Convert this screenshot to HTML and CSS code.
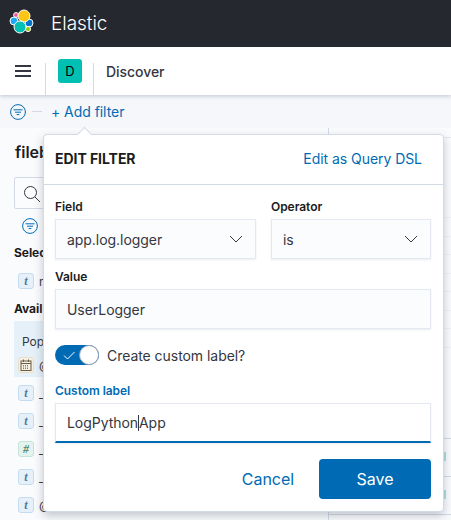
FILE: index.html
```html
<!DOCTYPE html>
<html lang="en">
<head>
    <meta charset="UTF-8">
    <meta name="viewport" content="width=device-width, initial-scale=1.0">
    <title>Discover - Elastic</title>
    <link rel="stylesheet" href="styles.css">
</head>
<body>
    <header class="topbar">
        <svg class="logo" width="26" height="26" viewBox="0 0 26 26">
            <g stroke="#fff" stroke-width="1">
                <circle cx="7" cy="6" r="2.400" fill="#f04e98"/>
                <circle cx="5" cy="12" r="4" fill="#1ba9f5"/>
                <circle cx="20" cy="14" r="4" fill="#0077cc"/>
                <circle cx="19" cy="20" r="2.600" fill="#93c90e"/>
                <circle cx="15" cy="7" r="6" fill="#fec514"/>
                <circle cx="11" cy="18" r="6" fill="#00bfb3"/>
            </g>
        </svg>
        <span class="brand">Elastic</span>
    </header>

    <nav class="navbar">
        <button class="burger" type="button" aria-label="Menu"><span></span><span></span><span></span></button>
        <div class="nav-space"><span class="avatar">D</span></div>
        <span class="nav-title">Discover</span>
    </nav>

    <div class="filterbar">
        <svg class="filter-icon" width="16" height="16" viewBox="0 0 16 16">
            <circle cx="8" cy="8" r="7.400" fill="none" stroke="#006bb4" stroke-width="1"/>
            <path d="M3.500 5.800h9M5 8.200h6M6.600 10.600h2.800" stroke="#006bb4" stroke-width="1" fill="none"/>
        </svg>
        <span class="filter-dash"></span>
        <a class="add-filter">+ Add filter</a>
    </div>

    <main class="content">
        <aside class="sidebar">
            <div class="index-name">fileb</div>
            <div class="search-box">
                <svg width="18" height="18" viewBox="0 0 18 18">
                    <circle cx="7.500" cy="7.500" r="6" fill="none" stroke="#343741" stroke-width="1"/>
                    <path d="M12 12l5 5" stroke="#343741" stroke-width="1"/>
                </svg>
            </div>
            <svg class="side-filter" width="16" height="16" viewBox="0 0 16 16">
                <circle cx="8" cy="8" r="7.400" fill="none" stroke="#006bb4" stroke-width="1"/>
                <path d="M3.500 5.800h9M5 8.200h6M6.600 10.600h2.800" stroke="#006bb4" stroke-width="1" fill="none"/>
            </svg>
            <div class="side-head">Selec</div>
            <div class="field-row first"><span class="tag">t</span><span>r</span></div>
            <div class="side-head avail">Avail</div>
            <div class="popular">
                <div class="pop-title">Pop</div>
                <div class="field-row pop-row">
                    <span class="tag date">
                        <svg width="12" height="12" viewBox="0 0 12 12">
                            <rect x="1" y="2" width="10" height="9.500" fill="none" stroke="#6a5d45" stroke-width="1"/>
                            <path d="M1 4.500h10M3.500 0.500v2.500M8.500 0.500v2.500" stroke="#6a5d45" stroke-width="1"/>
                            <path d="M3 6.500h6M3 8h6M3 9.500h6" stroke="#6a5d45" stroke-width="0.800" stroke-dasharray="1 1"/>
                        </svg>
                    </span>
                    <span>@</span>
                </div>
            </div>
            <div class="field-row"><span class="tag">t</span><span>_</span></div>
            <div class="field-row"><span class="tag">t</span><span>_</span></div>
            <div class="field-row"><span class="tag num">#</span><span>_</span></div>
            <div class="field-row"><span class="tag">t</span><span>_</span></div>
            <div class="field-row"><span class="tag">t</span><span>@</span></div>
        </aside>
        <section class="results">
            <div class="results-head"></div>
            <div class="faint-row"></div>
            <div class="faint-row"></div>
            <div class="faint-row"></div>
            <div class="faint-row"></div>
            <div class="faint-row"></div>
            <div class="faint-row"></div>
            <div class="faint-row"></div>
            <div class="faint-row last"></div>
            <div class="result-row"><span class="tick"></span></div>
            <div class="result-row"><span class="tick"></span></div>
            <div class="result-row end"></div>
        </section>
    </main>

    <div class="popover">
        <span class="arrow"></span>
        <div class="pop-head">
            <h2>EDIT FILTER</h2>
            <a>Edit as Query DSL</a>
        </div>
        <form class="pop-form">
            <div class="form-top">
                <div class="col-field">
                    <label>Field</label>
                    <div class="input select">
                        <span>app.log.logger</span>
                        <svg width="14" height="8" viewBox="0 0 14 8"><path d="M1 1l6 6 6-6" fill="none" stroke="#343741" stroke-width="1"/></svg>
                    </div>
                </div>
                <div class="col-op">
                    <label>Operator</label>
                    <div class="input select">
                        <span>is</span>
                        <svg width="14" height="8" viewBox="0 0 14 8"><path d="M1 1l6 6 6-6" fill="none" stroke="#343741" stroke-width="1"/></svg>
                    </div>
                </div>
            </div>
            <label>Value</label>
            <div class="input">UserLogger</div>
            <div class="switch-row">
                <span class="switch">
                    <svg width="12" height="9" viewBox="0 0 12 9"><path d="M1 4.500l3.500 3.500 7-7" fill="none" stroke="#fff" stroke-width="1"/></svg>
                    <span class="knob"></span>
                </span>
                <span>Create custom label?</span>
            </div>
            <label class="active">Custom label</label>
            <div class="input focused"><span>LogPython</span><span class="caret"></span><span>App</span></div>
            <div class="pop-actions">
                <a class="cancel">Cancel</a>
                <button class="save" type="button">Save</button>
            </div>
        </form>
    </div>
</body>
</html>
```

FILE: styles.css
```css
* {
    box-sizing: border-box;
}

body {
    margin: 0;
    height: 520px;
    overflow: hidden;
    font-family: Inter, "Liberation Sans", sans-serif;
    font-size: 14px;
    letter-spacing: -0.05px;
    color: #343741;
    background-color: #fafbfd;
}

.topbar {
    height: 47px;
    background-color: #25282f;
    display: flex;
    align-items: center;
    padding-left: 9px;
}

.logo {
    margin-right: 16px;
    margin-bottom: 3px;
}

.brand {
    color: #fff;
    font-size: 19px;
    font-weight: 300;
    margin-bottom: 1px;
}

.navbar {
    height: 48px;
    background-color: #fff;
    display: flex;
    align-items: center;
    box-shadow: 0 2px 3px rgba(152, 162, 179, 0.4);
    position: relative;
}

.burger {
    width: 46px;
    height: 32px;
    align-self: flex-end;
    padding: 0 0 16px;
    border: none;
    border-right: 1px solid #d3dae6;
    background: none;
    display: flex;
    flex-direction: column;
    align-items: center;
    justify-content: center;
    gap: 3px;
}

.burger span {
    display: block;
    width: 16px;
    height: 2px;
    background-color: #343741;
}

.nav-space {
    width: 48px;
    height: 32px;
    align-self: flex-end;
    border-right: 1px solid #d3dae6;
    position: relative;
}

.avatar {
    position: absolute;
    left: 12px;
    top: -4px;
    width: 24px;
    height: 24px;
    border-radius: 3px;
    background-color: #00bfb3;
    color: #000;
    font-size: 13px;
    display: flex;
    align-items: center;
    justify-content: center;
}

.nav-title {
    margin-left: 12px;
    font-size: 14px;
    font-weight: 500;
}

.filterbar {
    height: 33px;
    display: flex;
    align-items: center;
    padding-left: 10px;
    background-color: #f5f7fa;
}

.filter-dash {
    width: 10px;
    height: 1px;
    margin-left: 6px;
    background-color: #d3dae6;
}

.add-filter {
    margin-left: 9px;
    color: #006bb4;
    font-size: 14px;
}

.content {
    display: flex;
    height: 392px;
}

.sidebar {
    width: 329px;
    padding: 0 14px;
    border-right: 1px solid #d3dae6;
}

.index-name {
    margin-top: 14px;
    padding-left: 1px;
    font-size: 16px;
    font-weight: 600;
    color: #1a1c21;
}

.search-box {
    width: 100px;
    height: 32px;
    margin-top: 15px;
    padding: 7px 8px;
    background-color: #fbfcfd;
    border: 1px solid #d3dae6;
    border-radius: 2px;
}

.side-filter {
    display: block;
    margin: 9px 0 0 8px;
}

.side-head {
    margin-top: 11px;
    font-size: 12px;
    font-weight: 700;
    color: #1a1c21;
}

.side-head.avail {
    margin-top: 6px;
}

.field-row {
    height: 28px;
    display: flex;
    align-items: center;
    gap: 5px;
    padding-left: 4px;
    font-size: 12px;
}

.field-row.first {
    margin-top: 7px;
}

.tag {
    width: 16px;
    height: 16px;
    flex: none;
    border-radius: 3px;
    border: 1px solid #c6dcf0;
    background-color: #e6f0f8;
    color: #4f7ba0;
    font-family: "Liberation Serif", serif;
    font-style: italic;
    font-weight: 700;
    font-size: 12px;
    display: flex;
    align-items: center;
    justify-content: center;
}

.tag.date {
    border-color: #ecdfc9;
    background-color: #f6efe3;
}

.tag.num {
    border-color: #c5e5d8;
    background-color: #e4f3ed;
    color: #4f8a72;
}

.popular {
    margin-top: 5px;
    margin-bottom: 2px;
    height: 56px;
    background-color: #e6f0f8;
    padding-top: 13px;
}

.pop-title {
    padding-left: 8px;
    font-size: 12px;
}

.pop-row {
    height: 22px;
    margin-top: 5px;
}

.results {
    flex: 1;
    padding-top: 9px;
}

.results-head {
    height: 80px;
    border-top: 1px solid #e4e8f0;
}

.faint-row {
    height: 18.5px;
    border-top: 1px solid #eef1f6;
}

.faint-row.last {
    height: 91px;
}

.result-row {
    height: 38px;
    padding: 13px 0 0 115px;
    border-top: 1px solid #d3dae6;
}

.result-row.end {
    height: 6px;
    padding: 0;
}

.tick {
    display: block;
    width: 2px;
    height: 9px;
    background-color: #a8e0e0;
}

.popover {
    position: absolute;
    left: 43px;
    top: 134px;
    width: 401px;
    height: 378px;
    background-color: #fff;
    border: 1px solid #d3dae6;
    border-radius: 4px;
    box-shadow: 0 4px 10px rgba(65, 78, 101, 0.3);
}

.arrow {
    position: absolute;
    left: 35px;
    top: -6px;
    width: 11px;
    height: 11px;
    background-color: #fff;
    border-left: 1px solid #d3dae6;
    border-top: 1px solid #d3dae6;
    transform: rotate(45deg);
}

.pop-head {
    height: 50px;
    padding: 0 21px 2px 11px;
    display: flex;
    align-items: center;
    justify-content: space-between;
    border-bottom: 1px solid #d3dae6;
}

.pop-head h2 {
    margin: 0;
    font-size: 14px;
    font-weight: 700;
    color: #1a1c21;
}

.pop-head a {
    color: #006bb4;
    font-size: 14px;
}

.pop-form {
    padding: 12px 12px 0 11px;
}

.form-top {
    display: flex;
    gap: 15px;
}

.col-field {
    width: 201px;
}

.col-op {
    flex: 1;
}

label {
    display: block;
    height: 18px;
    margin-bottom: 4px;
    font-size: 12px;
    font-weight: 600;
    color: #1a1c21;
    line-height: 19px;
}

label.active {
    color: #006bb4;
}

.input {
    height: 40px;
    margin-bottom: 8px;
    padding: 0 11px;
    display: flex;
    align-items: center;
    font-size: 14px;
    background-color: #fbfcfd;
    border: 1px solid #e4e8f0;
    box-shadow: 0 1px 2px rgba(152, 162, 179, 0.2);
}

.select {
    justify-content: space-between;
    padding-right: 12px;
}

.switch-row {
    display: flex;
    align-items: center;
    gap: 8px;
    height: 20px;
    margin: 16px 0;
    font-size: 14px;
}

.switch {
    width: 44px;
    height: 20px;
    border-radius: 10px;
    background-color: #006bb4;
    position: relative;
    display: flex;
    align-items: center;
    padding-left: 8px;
}

.knob {
    position: absolute;
    right: 0;
    top: 0;
    width: 20px;
    height: 20px;
    border-radius: 50%;
    background-color: #fff;
    border: 1px solid #98a2b3;
}

.focused {
    background-color: #fff;
    border-bottom: 2px solid #006bb4;
}

.caret {
    width: 1px;
    height: 16px;
    background-color: #343741;
}

.pop-actions {
    display: flex;
    align-items: center;
    justify-content: flex-end;
    margin-top: 16px;
}

.cancel {
    color: #006bb4;
    font-size: 16px;
    margin-right: 25px;
}

.save {
    width: 112px;
    height: 40px;
    border: none;
    border-radius: 4px;
    background-color: #006bb4;
    color: #fff;
    font-family: inherit;
    font-size: 16px;
}
```
